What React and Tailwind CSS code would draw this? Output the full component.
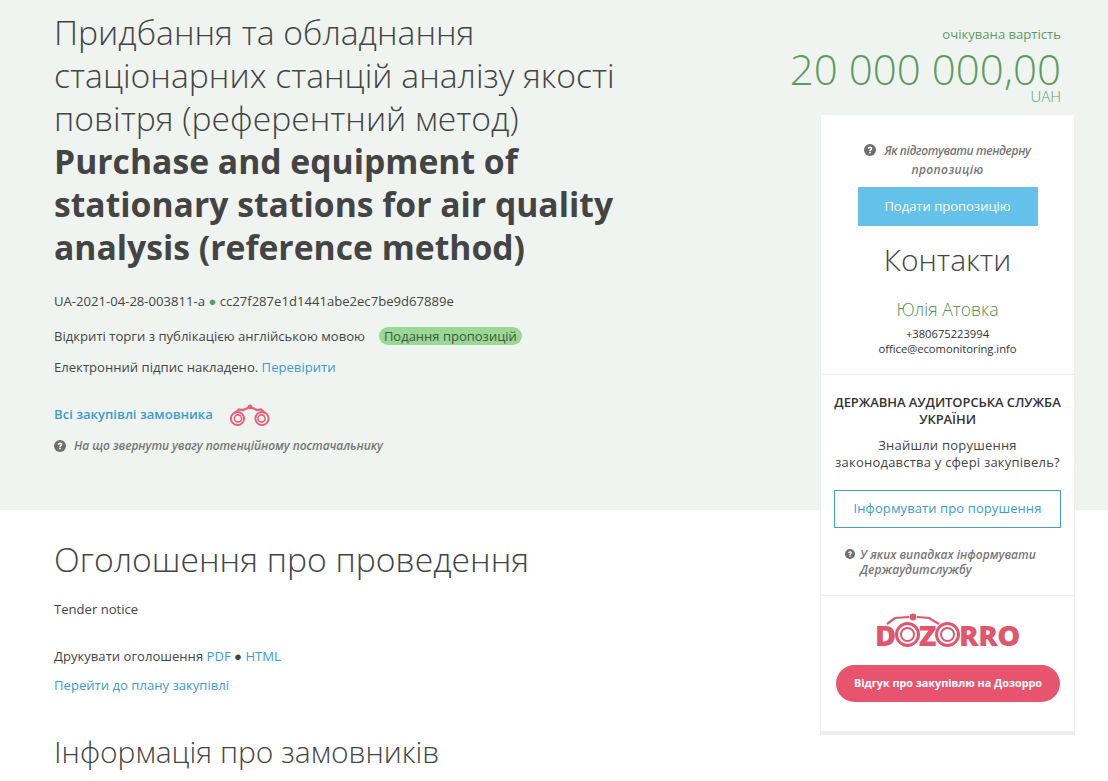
import React from "react";

const Q = ({ className = "" }) => (
  <svg viewBox="0 0 24 24" className={className} aria-hidden="true">
    <circle cx="12" cy="12" r="12" fill="#6f6f6f" />
    <path d="M7.6 9.3c0-2.5 1.9-4.2 4.5-4.2 2.6 0 4.5 1.6 4.5 3.8 0 1.7-.9 2.6-2.1 3.4-.9.6-1.1.9-1.1 1.8h-3c0-1.8.6-2.7 1.8-3.5 1-.6 1.3-1 1.3-1.6 0-.8-.6-1.2-1.4-1.2-1 0-1.6.6-1.6 1.5H7.6z" fill="#fff" />
    <rect x="10.4" y="15.4" width="3" height="3.2" fill="#fff" />
  </svg>
);

const Binoculars = ({ className = "" }) => (
  <svg viewBox="0 0 40 23" className={className} fill="none" stroke="#e8607a" aria-hidden="true">
    <circle cx="7.5" cy="14.5" r="6.6" strokeWidth="2" />
    <circle cx="8" cy="14.5" r="3.6" strokeWidth="1.6" />
    <circle cx="32" cy="14.5" r="6.6" strokeWidth="2" />
    <circle cx="31.5" cy="14.5" r="3.6" strokeWidth="1.6" />
    <path d="M5 9 L9 5.5 L13 6 L20 3 L27 6 L31 5.5 L35 9" strokeWidth="2.2" />
    <circle cx="20" cy="3" r="2.4" fill="#e8607a" stroke="none" />
  </svg>
);

const Ring = () => (
  <span className="w-[25px] h-[25px] rounded-full border-[3px] border-[#e2566c] flex items-center justify-center mx-[-1px] mt-[1px]">
    <span className="w-[15px] h-[15px] rounded-full border-[2px] border-[#e2566c] block" />
  </span>
);

const Dozorro = () => (
  <div className="relative flex items-center justify-center h-[36px] font-['Open_Sans',sans-serif] font-extrabold text-[29px] leading-none text-[#e2566c] tracking-[-0.5px]">
    <span>D</span>
    <Ring />
    <span>Z</span>
    <Ring />
    <span>RRO</span>
    <svg viewBox="0 0 60 12" className="absolute left-[47px] top-[-3px] w-[60px] h-[12px]" fill="none" stroke="#e2566c" strokeWidth="2.2" aria-hidden="true">
      <path d="M4 11 L12 5 L26 4 M56 11 L46 5 L34 4" />
      <circle cx="30" cy="4" r="3.4" fill="#e2566c" stroke="none" />
    </svg>
  </div>
);

export default function App() {
  return (
    <div className="relative h-[781px] overflow-hidden bg-white font-['Open_Sans',sans-serif] text-[13.1px] text-[#444]">
      <section className="h-[510px] bg-[#eff4f1] pl-[54px] pr-[34px] pt-[11px] flex justify-between">
        <div className="w-[600px]">
          <h1 className="text-[33.7px] leading-[43px] font-light text-[#444] w-[590px]">
            Придбання та обладнання стаціонарних станцій аналізу якості повітря (референтний метод)
            <b className="block font-bold">Purchase and equipment of stationary stations for air quality analysis (reference method)</b>
          </h1>
          <p className="mt-[23px] leading-[18px]">
            UA-2021-04-28-003811-a <span className="text-[#5a9e5f]">●</span> cc27f287e1d1441abe2ec7be9d67889e
          </p>
          <div className="mt-[17px] flex items-center leading-[18px]">
            <span>Відкриті торги з публікацією англійською мовою</span>
            <span className="ml-[14px] bg-[#9bd795] rounded-full px-[5px] text-[13px] text-[#3d5a3d]">Подання пропозицій</span>
          </div>
          <p className="mt-[13px] leading-[18px]">
            Електронний підпис накладено. <a className="text-[#3b9ccb]">Перевірити</a>
          </p>
          <div className="mt-[26px] flex items-center h-[26px]">
            <a className="font-semibold text-[#3b9ccb]">Всі закупівлі замовника</a>
            <Binoculars className="ml-[17px] w-[40px] h-[23px]" />
          </div>
          <div className="mt-[9px] flex items-center leading-[18px] text-[12px] tracking-[-0.07px] italic font-semibold text-[#777]">
            <Q className="w-[12px] h-[12px] mr-[8px]" />
            На що звернути увагу потенційному постачальнику
          </div>
        </div>
        <div className="text-right pr-[13px] text-[#5d9c5e]">
          <div className="mt-[14px] leading-[18px]">очікувана вартість</div>
          <div className="mt-[6px] text-[42.1px] leading-[40px] font-light">20 000 000,00</div>
          <div className="mt-[2px] text-[15px] leading-[10px] font-light">UAH</div>
        </div>
      </section>

      <section className="pl-[54px] pt-[27px]">
        <h2 className="text-[33.7px] leading-[44px] font-light text-[#444]">Оголошення про проведення</h2>
        <p className="mt-[19px] leading-[18px]">Tender notice</p>
        <p className="mt-[29px] leading-[18px]">
          Друкувати оголошення <a className="text-[#3b9ccb]">PDF</a> ● <a className="text-[#3b9ccb]">HTML</a>
        </p>
        <p className="mt-[11px] leading-[18px]"><a className="text-[#3b9ccb]">Перейти до плану закупівлі</a></p>
        <h2 className="mt-[36px] text-[30px] leading-[44px] font-light text-[#444]">Інформація про замовників</h2>
      </section>

      <aside className="absolute left-[820px] top-[115px] w-[255px] h-[620px] bg-white border-x border-[#eeeeee] border-b-[4px] border-b-[#eeeeee] text-center">
        <div className="h-[260px] border-b border-[#eeeeee] pt-[26px]">
          <div className="mx-auto w-[190px] text-[12px] leading-[19px] italic font-semibold text-[#777]">
            <div className="tracking-[-0.4px]">
              <Q className="inline-block w-[12px] h-[12px] mr-[8px] align-[-1px]" />
              Як підготувати тендерну
            </div>
            <div className="tracking-[0.4px]">пропозицію</div>
          </div>
          <button className="mt-[8px] w-[180px] h-[39px] bg-[#64c1ea] text-white text-[13px]">Подати пропозицію</button>
          <div className="mt-[12px] text-[30px] leading-[44px] font-light text-[#444]">Контакти</div>
          <div className="mt-[15px] text-[17.7px] leading-[24px] font-light text-[#4f9150]">Юлія Атовка</div>
          <div className="mt-[5px] text-[11.2px] leading-[15px] text-[#333]">+380675223994</div>
          <div className="text-[11.2px] leading-[15px] text-[#333]">office@ecomonitoring.info</div>
        </div>
        <div className="h-[221px] border-b border-[#eeeeee] px-[8px] pt-[19px]">
          <div className="text-[13px] leading-[17px] font-semibold text-[#333] tracking-[-0.08px]">ДЕРЖАВНА АУДИТОРСЬКА СЛУЖБА УКРАЇНИ</div>
          <div className="mt-[9px] text-[13px] leading-[17px] tracking-[0.22px] text-[#444]">Знайшли порушення законодавства у сфері закупівель?</div>
          <div className="px-[5px]">
            <button className="mt-[19px] w-full h-[38px] border border-[#3fa5b0] text-[#3b9ccb] text-[13px] tracking-[0.1px]">Інформувати про порушення</button>
          </div>
          <div className="mt-[19px] pl-[16px] flex text-left text-[12px] leading-[15px] italic font-semibold text-[#777]">
            <Q className="w-[10px] h-[10px] mr-[5px] mt-[2px] shrink-0" />
            <span>У яких випадках інформувати Держаудитслужбу</span>
          </div>
        </div>
        <div className="px-[15px] pt-[20px]">
          <Dozorro />
          <button className="mt-[13px] w-[224px] h-[37px] rounded-full bg-[#e8546d] text-white text-[10.8px] font-bold">Відгук про закупівлю на Дозорро</button>
        </div>
      </aside>
    </div>
  );
}
